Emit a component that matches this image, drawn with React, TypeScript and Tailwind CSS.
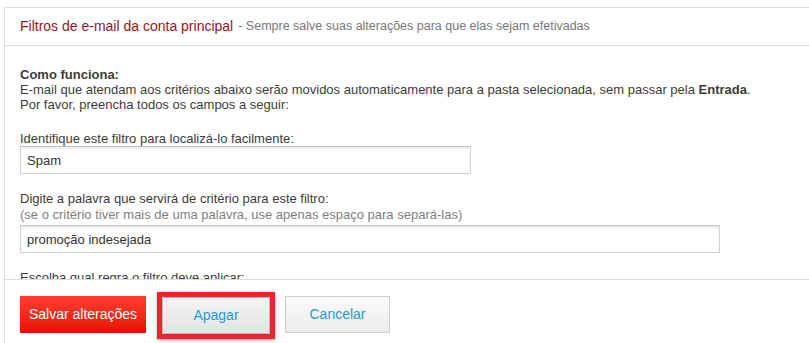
import React from "react";

export default function App() {
  return (
    <div
      className="w-[809px] h-[343px] overflow-hidden bg-white pt-[7px] pl-[4px]"
      style={{ fontFamily: '"Liberation Sans", Arial, sans-serif' }}
    >
      <div className="w-[840px] h-[336px] border-l border-t border-[#dcdcdc] flex flex-col">
        <div className="h-[38px] shrink-0 border-b border-[#dcdcdc] pl-[15px] flex items-center">
          <span className="text-[14px] text-[#9c1520]">Filtros de e-mail da conta principal</span>
          <span className="text-[12.5px] text-[#777] ml-[5px]">- Sempre salve suas alterações para que elas sejam efetivadas</span>
        </div>
        <div className="h-[233px] shrink-0 overflow-hidden pl-[15px] pt-[21px] text-[13px] leading-[15px] text-[#3c3c3c]">
          <div className="font-bold">Como funciona:</div>
          <div>
            E-mail que atendam aos critérios abaixo serão movidos automaticamente para a pasta selecionada, sem passar pela{" "}
            <span className="font-bold">Entrada</span>.
          </div>
          <div>Por favor, preencha todos os campos a seguir:</div>

          <div className="mt-[19px]">Identifique este filtro para localizá-lo facilmente:</div>
          <input
            readOnly
            defaultValue="Spam"
            className="block w-[451px] h-[28px] border border-[#d2d2d2] border-t-[#c4c4c4] shadow-[inset_0_2px_2px_rgba(0,0,0,0.08)] pl-[6px] text-[13px] text-[#333] outline-none"
          />

          <div className="mt-[17px]">Digite a palavra que servirá de critério para este filtro:</div>
          <div className="mt-[1px] text-[#808080]">(se o critério tiver mais de uma palavra, use apenas espaço para separá-las)</div>
          <input
            readOnly
            defaultValue="promoção indesejada"
            className="block mt-[3px] w-[700px] h-[28px] border border-[#d2d2d2] border-t-[#c4c4c4] shadow-[inset_0_2px_2px_rgba(0,0,0,0.08)] pl-[6px] text-[13px] text-[#333] outline-none"
          />

          <div className="mt-[17px]">Escolha qual regra o filtro deve aplicar:</div>
        </div>
        <div className="flex-1 border-t border-[#dcdcdc] pl-[15px] pt-[16px] flex items-start">
          <button className="w-[126px] h-[37px] bg-gradient-to-b from-[#ff3d2e] to-[#e40e00] text-white text-[14px]">
            Salvar alterações
          </button>
          <div className="ml-[11px] -mt-[4px] border-[5px] border-[#e8262d] shadow-[0_1px_3px_rgba(0,0,0,0.35)]">
            <button className="block w-[108px] h-[37px] border border-[#b9b9b9] bg-gradient-to-b from-[#f5f5f5] to-[#e3e3e3] text-[14px] text-[#1d9bd1]">
              Apagar
            </button>
          </div>
          <button className="ml-[10px] w-[105px] h-[37px] border border-[#cfcfcf] bg-gradient-to-b from-[#fbfbfb] to-[#ececec] text-[14px] text-[#1d9bd1]">
            Cancelar
          </button>
        </div>
      </div>
    </div>
  );
}
